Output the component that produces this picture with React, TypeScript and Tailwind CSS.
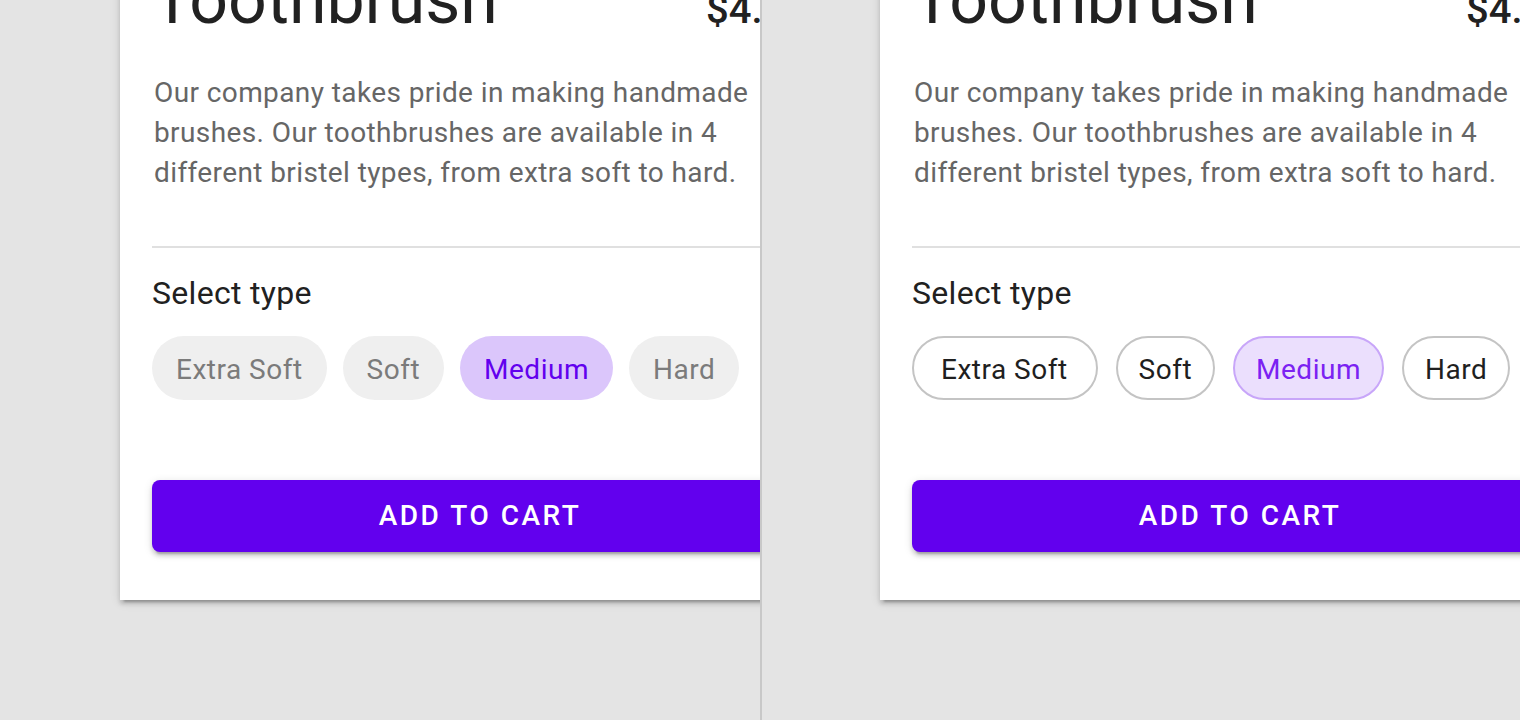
import React from "react";

const types = ["Extra Soft", "Soft", "Medium", "Hard"];

function Card({ outlined }: { outlined: boolean }) {
  return (
    <div className="w-[720px] shrink-0 self-start bg-white mt-[-40px] px-[32px] pb-[48px] shadow-[0_4px_4px_rgba(0,0,0,0.14),0_6px_2px_-4px_rgba(0,0,0,0.2),0_2px_10px_rgba(0,0,0,0.12)]">
      <div className="flex justify-between items-baseline">
        <div className="text-[68px] leading-[80px] text-[#212121] font-normal">Toothbrush</div>
        <div className="text-[40px] leading-[48px] text-[#212121] font-medium">$4.99</div>
      </div>
      <p className="mt-[33px] pl-[2px] text-[28px] leading-[40px] text-[#666666] tracking-[0.4px]">
        Our company takes pride in making handmade brushes. Our toothbrushes are available in 4 different bristel types, from extra soft to hard.
      </p>
      <div className="mt-[53px] h-[2px] bg-[#e0e0e0]" />
      <div className="mt-[21px] text-[32px] leading-[48px] text-[#212121] tracking-[0.3px]">Select type</div>
      <div className={`mt-[19px] flex ${outlined ? "gap-[18px]" : "gap-[16px]"}`}>
        {types.map((t, i) => {
          const sel = t === "Medium";
          let cls = "";
          if (outlined) {
            const pad = i === 0 ? "pl-[27px] pr-[28px]" : "px-[21px]";
            cls = sel
              ? `bg-[#ebdffd] border-2 border-[#c8a6f9] text-[#7b22f2] ${pad}`
              : `bg-white border-2 border-[#c4c4c4] text-[#1f1f1f] ${pad}`;
          } else {
            cls = sel ? "bg-[#dbc6fb] text-[#6200ee] px-[24px]" : "bg-[#efefef] text-[#7b7b7b] px-[24px]";
          }
          return (
            <div
              key={t}
              className={`h-[64px] rounded-full flex items-center pt-[3px] text-[28px] leading-[40px] tracking-[0.5px] ${cls}`}
            >
              {t}
            </div>
          );
        })}
      </div>
      <button className="mt-[80px] w-full h-[72px] rounded-[8px] bg-[#6200ee] text-white text-[28px] font-medium tracking-[2.5px] uppercase shadow-[0_6px_2px_-4px_rgba(0,0,0,0.2),0_4px_4px_0_rgba(0,0,0,0.14),0_2px_10px_0_rgba(0,0,0,0.12)]">
        Add to cart
      </button>
    </div>
  );
}

export default function App() {
  return (
    <div className="w-[1520px] h-[720px] flex overflow-hidden bg-[#e4e4e4]" style={{ fontFamily: "Roboto, 'Noto Sans', sans-serif" }}>
      <div className="w-[760px] h-[720px] overflow-hidden flex items-start bg-[#e4e4e4] pl-[120px]">
        <Card outlined={false} />
      </div>
      <div className="w-[2px] h-[720px] bg-[#c8c8c8]" />
      <div className="w-[758px] h-[720px] overflow-hidden flex items-start bg-[#e4e4e4] pl-[118px]">
        <Card outlined={true} />
      </div>
    </div>
  );
}
